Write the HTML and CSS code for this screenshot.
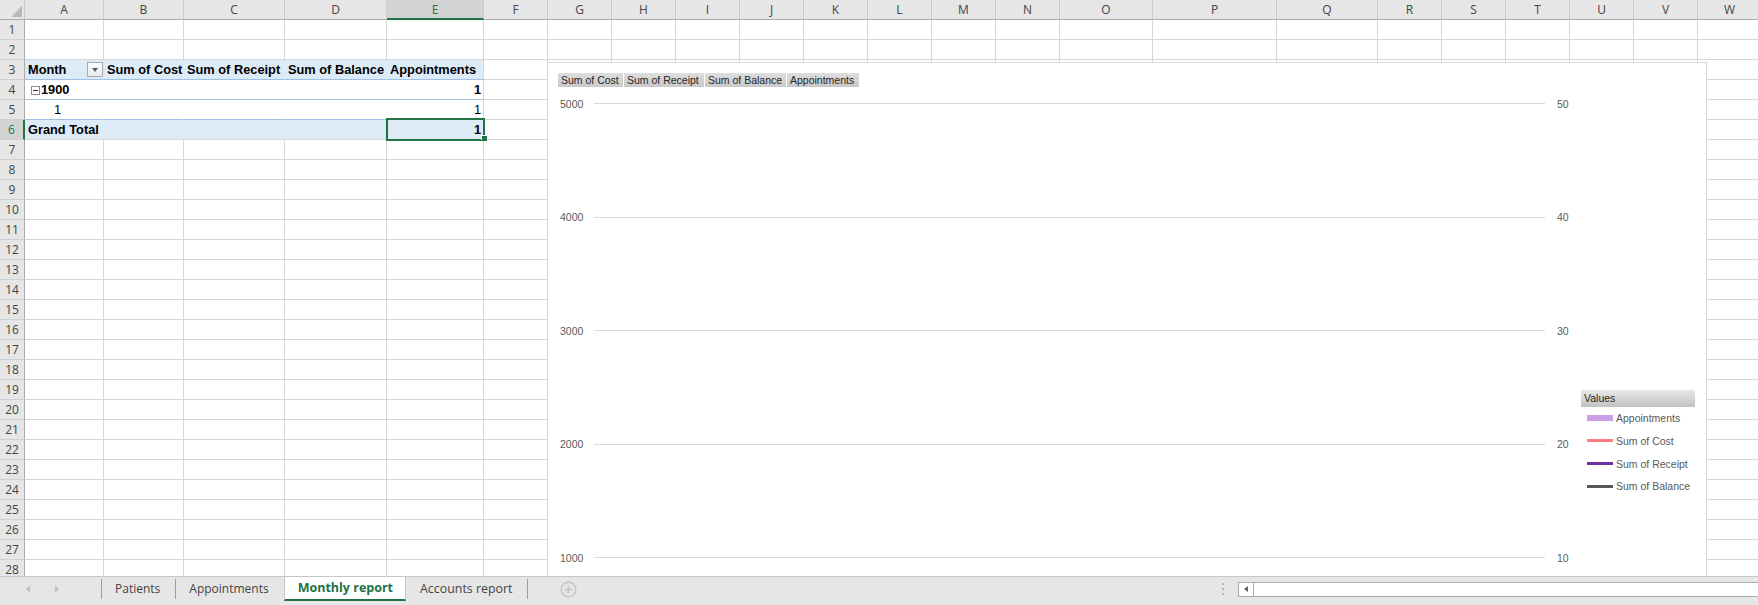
FILE: index.html
```html
<!DOCTYPE html>
<html lang="en">
<head>
<meta charset="utf-8">
<title>Monthly report</title>
<link rel="stylesheet" href="styles.css">
</head>
<body>
<div class="app">
  <div class="sheet">
    <div class="grid">
      <div class="corner"></div>
      <div class="ch">A</div><div class="ch">B</div><div class="ch">C</div><div class="ch">D</div><div class="ch csel">E</div><div class="ch">F</div><div class="ch">G</div><div class="ch">H</div><div class="ch">I</div><div class="ch">J</div><div class="ch">K</div><div class="ch">L</div><div class="ch">M</div><div class="ch">N</div><div class="ch">O</div><div class="ch">P</div><div class="ch">Q</div><div class="ch">R</div><div class="ch">S</div><div class="ch">T</div><div class="ch">U</div><div class="ch">V</div><div class="ch">W</div>

      <div class="rh">1</div><div></div><div></div><div></div><div></div><div></div><div></div><div></div><div></div><div></div><div></div><div></div><div></div><div></div><div></div><div></div><div></div><div></div><div></div><div></div><div></div><div></div><div></div><div></div>
      <div class="rh">2</div><div></div><div></div><div></div><div></div><div></div><div></div><div></div><div></div><div></div><div></div><div></div><div></div><div></div><div></div><div></div><div></div><div></div><div></div><div></div><div></div><div></div><div></div><div></div>

      <div class="rh">3</div><div class="pv ph b month"><span>Month</span><span class="dd"></span></div><div class="pv ph b">Sum of Cost</div><div class="pv ph b">Sum of Receipt</div><div class="pv ph b">Sum of Balance</div><div class="pv ph pe b">Appointments</div><div></div><div></div><div></div><div></div><div></div><div></div><div></div><div></div><div></div><div></div><div></div><div></div><div></div><div></div><div></div><div></div><div></div><div></div>

      <div class="rh">4</div><div class="pv pr b year"><span class="tog"></span>1900</div><div class="pv pr"></div><div class="pv pr"></div><div class="pv pr"></div><div class="pv pr pe num b">1</div><div></div><div></div><div></div><div></div><div></div><div></div><div></div><div></div><div></div><div></div><div></div><div></div><div></div><div></div><div></div><div></div><div></div><div></div>

      <div class="rh">5</div><div class="pv pr ind">1</div><div class="pv pr"></div><div class="pv pr"></div><div class="pv pr"></div><div class="pv pr pe num">1</div><div></div><div></div><div></div><div></div><div></div><div></div><div></div><div></div><div></div><div></div><div></div><div></div><div></div><div></div><div></div><div></div><div></div><div></div>

      <div class="rh rsel">6</div><div class="pv pg b">Grand Total</div><div class="pv pg"></div><div class="pv pg"></div><div class="pv pg"></div><div class="pv pg pe num b sel">1<span class="handle"></span></div><div></div><div></div><div></div><div></div><div></div><div></div><div></div><div></div><div></div><div></div><div></div><div></div><div></div><div></div><div></div><div></div><div></div><div></div>

      <div class="rh">7</div><div></div><div></div><div></div><div></div><div></div><div></div><div></div><div></div><div></div><div></div><div></div><div></div><div></div><div></div><div></div><div></div><div></div><div></div><div></div><div></div><div></div><div></div><div></div>
      <div class="rh">8</div><div></div><div></div><div></div><div></div><div></div><div></div><div></div><div></div><div></div><div></div><div></div><div></div><div></div><div></div><div></div><div></div><div></div><div></div><div></div><div></div><div></div><div></div><div></div>
      <div class="rh">9</div><div></div><div></div><div></div><div></div><div></div><div></div><div></div><div></div><div></div><div></div><div></div><div></div><div></div><div></div><div></div><div></div><div></div><div></div><div></div><div></div><div></div><div></div><div></div>
      <div class="rh">10</div><div></div><div></div><div></div><div></div><div></div><div></div><div></div><div></div><div></div><div></div><div></div><div></div><div></div><div></div><div></div><div></div><div></div><div></div><div></div><div></div><div></div><div></div><div></div>
      <div class="rh">11</div><div></div><div></div><div></div><div></div><div></div><div></div><div></div><div></div><div></div><div></div><div></div><div></div><div></div><div></div><div></div><div></div><div></div><div></div><div></div><div></div><div></div><div></div><div></div>
      <div class="rh">12</div><div></div><div></div><div></div><div></div><div></div><div></div><div></div><div></div><div></div><div></div><div></div><div></div><div></div><div></div><div></div><div></div><div></div><div></div><div></div><div></div><div></div><div></div><div></div>
      <div class="rh">13</div><div></div><div></div><div></div><div></div><div></div><div></div><div></div><div></div><div></div><div></div><div></div><div></div><div></div><div></div><div></div><div></div><div></div><div></div><div></div><div></div><div></div><div></div><div></div>
      <div class="rh">14</div><div></div><div></div><div></div><div></div><div></div><div></div><div></div><div></div><div></div><div></div><div></div><div></div><div></div><div></div><div></div><div></div><div></div><div></div><div></div><div></div><div></div><div></div><div></div>
      <div class="rh">15</div><div></div><div></div><div></div><div></div><div></div><div></div><div></div><div></div><div></div><div></div><div></div><div></div><div></div><div></div><div></div><div></div><div></div><div></div><div></div><div></div><div></div><div></div><div></div>
      <div class="rh">16</div><div></div><div></div><div></div><div></div><div></div><div></div><div></div><div></div><div></div><div></div><div></div><div></div><div></div><div></div><div></div><div></div><div></div><div></div><div></div><div></div><div></div><div></div><div></div>
      <div class="rh">17</div><div></div><div></div><div></div><div></div><div></div><div></div><div></div><div></div><div></div><div></div><div></div><div></div><div></div><div></div><div></div><div></div><div></div><div></div><div></div><div></div><div></div><div></div><div></div>
      <div class="rh">18</div><div></div><div></div><div></div><div></div><div></div><div></div><div></div><div></div><div></div><div></div><div></div><div></div><div></div><div></div><div></div><div></div><div></div><div></div><div></div><div></div><div></div><div></div><div></div>
      <div class="rh">19</div><div></div><div></div><div></div><div></div><div></div><div></div><div></div><div></div><div></div><div></div><div></div><div></div><div></div><div></div><div></div><div></div><div></div><div></div><div></div><div></div><div></div><div></div><div></div>
      <div class="rh">20</div><div></div><div></div><div></div><div></div><div></div><div></div><div></div><div></div><div></div><div></div><div></div><div></div><div></div><div></div><div></div><div></div><div></div><div></div><div></div><div></div><div></div><div></div><div></div>
      <div class="rh">21</div><div></div><div></div><div></div><div></div><div></div><div></div><div></div><div></div><div></div><div></div><div></div><div></div><div></div><div></div><div></div><div></div><div></div><div></div><div></div><div></div><div></div><div></div><div></div>
      <div class="rh">22</div><div></div><div></div><div></div><div></div><div></div><div></div><div></div><div></div><div></div><div></div><div></div><div></div><div></div><div></div><div></div><div></div><div></div><div></div><div></div><div></div><div></div><div></div><div></div>
      <div class="rh">23</div><div></div><div></div><div></div><div></div><div></div><div></div><div></div><div></div><div></div><div></div><div></div><div></div><div></div><div></div><div></div><div></div><div></div><div></div><div></div><div></div><div></div><div></div><div></div>
      <div class="rh">24</div><div></div><div></div><div></div><div></div><div></div><div></div><div></div><div></div><div></div><div></div><div></div><div></div><div></div><div></div><div></div><div></div><div></div><div></div><div></div><div></div><div></div><div></div><div></div>
      <div class="rh">25</div><div></div><div></div><div></div><div></div><div></div><div></div><div></div><div></div><div></div><div></div><div></div><div></div><div></div><div></div><div></div><div></div><div></div><div></div><div></div><div></div><div></div><div></div><div></div>
      <div class="rh">26</div><div></div><div></div><div></div><div></div><div></div><div></div><div></div><div></div><div></div><div></div><div></div><div></div><div></div><div></div><div></div><div></div><div></div><div></div><div></div><div></div><div></div><div></div><div></div>
      <div class="rh">27</div><div></div><div></div><div></div><div></div><div></div><div></div><div></div><div></div><div></div><div></div><div></div><div></div><div></div><div></div><div></div><div></div><div></div><div></div><div></div><div></div><div></div><div></div><div></div>
      <div class="rh">28</div><div></div><div></div><div></div><div></div><div></div><div></div><div></div><div></div><div></div><div></div><div></div><div></div><div></div><div></div><div></div><div></div><div></div><div></div><div></div><div></div><div></div><div></div><div></div>
    </div>

    <div class="chart">
      <div class="plot">
        <div class="fields">
          <div class="fbtn f-cost">Sum of Cost</div>
          <div class="fbtn f-receipt">Sum of Receipt</div>
          <div class="fbtn f-balance">Sum of Balance</div>
          <div class="fbtn f-appt">Appointments</div>
        </div>
        <div class="axis">
          <div class="tick"><span class="tl">5000</span><span class="tline"></span><span class="tr">50</span></div>
          <div class="tick"><span class="tl">4000</span><span class="tline"></span><span class="tr">40</span></div>
          <div class="tick"><span class="tl">3000</span><span class="tline"></span><span class="tr">30</span></div>
          <div class="tick"><span class="tl">2000</span><span class="tline"></span><span class="tr">20</span></div>
          <div class="tick"><span class="tl">1000</span><span class="tline"></span><span class="tr">10</span></div>
        </div>
      </div>
      <div class="legend">
        <div class="lhead">Values</div>
        <div class="litem"><span class="sw sw-appt"></span>Appointments</div>
        <div class="litem"><span class="sw sw-cost"></span>Sum of Cost</div>
        <div class="litem"><span class="sw sw-receipt"></span>Sum of Receipt</div>
        <div class="litem"><span class="sw sw-balance"></span>Sum of Balance</div>
      </div>
    </div>
  </div>

  <div class="tabbar">
    <div class="nav"><span class="arr arr-l"></span><span class="arr arr-r"></span></div>
    <span class="sep"></span>
    <div class="tab">Patients</div>
    <span class="sep"></span>
    <div class="tab">Appointments</div>
    <div class="tab active">Monthly report</div>
    <div class="tab tab-last">Accounts report</div>
    <span class="sep"></span>
    <div class="add">
      <svg width="17" height="17" viewBox="0 0 17 17"><circle cx="8.5" cy="8.5" r="7.3" fill="none" stroke="#c4c4c4" stroke-width="1.4"/><path d="M8.5 4.8v7.4M4.8 8.5h7.4" stroke="#c4c4c4" stroke-width="1.6"/></svg>
    </div>
    <div class="dots"><span></span><span></span><span></span></div>
    <div class="hscroll"><span class="sb-left"><span class="sb-tri"></span></span></div>
  </div>
</div>
</body>
</html>
```
FILE: styles.css
```css
html, body {
  margin: 0;
  padding: 0;
}
body {
  width: 1758px;
  height: 605px;
  overflow: hidden;
  background: #fff;
  font-family: "Liberation Sans", Arial, sans-serif;
  color: #000;
}
.app {
  display: flex;
  flex-direction: column;
  height: 605px;
}
.sheet {
  position: relative;
  flex: none;
  height: 576px;
  overflow: hidden;
}
.grid {
  display: grid;
  grid-template-columns: 25px 79px 80px 101px 102px 97px repeat(9, 64px) 93px 124px 101px repeat(6, 64px);
  grid-auto-rows: 20px;
  width: max-content;
}
.grid > * {
  position: relative;
  box-sizing: border-box;
  border-right: 1px solid #d6d6d6;
  border-bottom: 1px solid #d6d6d6;
  padding: 0 3px;
  font-size: 12.8px;
  line-height: 20px;
  white-space: nowrap;
}
.corner {
  background: #e6e6e6;
  border-right-color: #c8c8c8;
  border-bottom-color: #ababab;
}
.corner::after {
  content: "";
  position: absolute;
  right: 2px;
  bottom: 2px;
  width: 0;
  height: 0;
  border-style: solid;
  border-width: 0 0 11px 11px;
  border-color: transparent transparent #b9b9b9 transparent;
}
.ch {
  background: #e6e6e6;
  border-right-color: #cbcbcb;
  border-bottom-color: #ababab;
  text-align: center;
  font-family: "Open Sans", sans-serif;
  font-size: 12px;
  line-height: 19px;
  color: #444;
}
.csel {
  background: #d3d3d3;
  color: #217346;
  border-bottom: 2px solid #217346;
}
.rh {
  background: #e6e6e6;
  border-right-color: #ababab;
  border-bottom-color: #d0d0d0;
  padding: 0;
  text-align: center;
  font-family: "Open Sans", sans-serif;
  font-size: 12px;
  line-height: 20px;
  color: #444;
}
.rsel {
  background: #d3d3d3;
  color: #217346;
  border-right: 2px solid #217346;
}

/* pivot table */
.pv {
  border-right-color: transparent;
}
.pe {
  border-right-color: #d6d6d6;
}
.ph {
  background: #ddebf7;
  border-bottom-color: #9bc2e6;
}
.pr {
  background: #fff;
  border-bottom-color: #9bc2e6;
}
.pg {
  background: #ddebf7;
}
.b {
  font-weight: bold;
}
.num {
  text-align: right;
  padding-right: 2px;
}
.month {
  display: flex;
  align-items: center;
  justify-content: space-between;
  padding-right: 0;
}
.dd {
  position: relative;
  width: 16px;
  height: 15px;
  box-sizing: border-box;
  border: 1px solid #a9a9a9;
  background: linear-gradient(#fbfbfb, #ececec);
}
.dd::after {
  content: "";
  position: absolute;
  left: 4px;
  top: 5px;
  border-style: solid;
  border-width: 4px 3.5px 0 3.5px;
  border-color: #5a5a5a transparent transparent transparent;
}
.year {
  padding-left: 6px;
  display: flex;
  align-items: center;
}
.tog {
  position: relative;
  width: 9px;
  height: 9px;
  box-sizing: border-box;
  border: 1px solid #8c8c8c;
  background: #fff;
  margin-right: 1px;
  margin-top: 1px;
}
.tog::after {
  content: "";
  position: absolute;
  left: 1px;
  top: 3px;
  width: 5px;
  height: 1px;
  background: #333;
}
.ind {
  padding-left: 29px;
}
.sel {
  z-index: 2;
}
.sel::before {
  content: "";
  position: absolute;
  left: -1px;
  top: -2px;
  width: 99px;
  height: 23px;
  box-sizing: border-box;
  border: 2px solid #217346;
}
.handle {
  position: absolute;
  left: 95px;
  top: 16px;
  width: 5px;
  height: 5px;
  background: #217346;
  box-shadow: -1px -1px 0 0 #fff;
}

/* chart overlay */
.chart {
  position: absolute;
  left: 547px;
  top: 62px;
  width: 1160px;
  height: 600px;
  box-sizing: border-box;
  border: 1px solid #d9d9d9;
  background: #fff;
  z-index: 3;
  display: flex;
  align-items: flex-start;
  padding: 10px 0 0 10px;
  font-family: "Liberation Sans", Arial, sans-serif;
  font-size: 10.5px;
  color: #595959;
}
.plot {
  display: flex;
  flex-direction: column;
  width: 1019px;
  flex: none;
}
.fields {
  display: flex;
  gap: 1px;
  height: 14px;
}
.fbtn {
  box-sizing: border-box;
  height: 14px;
  padding-left: 3px;
  line-height: 14px;
  white-space: nowrap;
  overflow: hidden;
  color: #262626;
  background: linear-gradient(#dedede, #c9c9c9);
}
.f-cost { width: 65px; }
.f-receipt { width: 80px; }
.f-balance { width: 81px; }
.f-appt { width: 72px; }
.axis {
  display: flex;
  flex-direction: column;
  gap: 98.5px;
  margin-top: 9px;
}
.tick {
  display: flex;
  align-items: center;
  height: 15px;
}
.tl {
  width: 36px;
  box-sizing: border-box;
  padding-left: 2px;
}
.tline {
  width: 951px;
  height: 1px;
  background: #d9d9d9;
}
.tr {
  margin-left: 12px;
}
.legend {
  flex: none;
  width: 114px;
  margin-left: 4px;
  margin-top: 317px;
}
.lhead {
  height: 17px;
  line-height: 17px;
  padding-left: 3px;
  color: #262626;
  background: linear-gradient(#e9e9e9, #c2c2c2);
}
.litem {
  display: flex;
  align-items: center;
  height: 22.67px;
  white-space: nowrap;
}
.sw {
  flex: none;
  width: 26px;
  height: 3px;
  margin: 0 3px 0 6px;
}
.sw-appt { height: 6px; background: #c9a0e6; }
.sw-cost { background: #ff7c80; }
.sw-receipt { background: #7030a0; }
.sw-balance { background: #595959; }

/* sheet tabs */
.tabbar {
  flex: none;
  height: 29px;
  box-sizing: border-box;
  border-top: 1px solid #c6c6c6;
  padding-bottom: 4px;
  background: #e6e6e6;
  display: flex;
  align-items: center;
  overflow: hidden;
  font-family: "Open Sans", sans-serif;
  font-size: 12px;
  color: #444;
}
.nav {
  flex: none;
  width: 101px;
  display: flex;
  align-items: center;
}
.arr {
  width: 0;
  height: 0;
  border-style: solid;
}
.arr-l {
  margin-left: 26px;
  border-width: 4px 4px 4px 0;
  border-color: transparent #c2c2c2 transparent transparent;
}
.arr-r {
  margin-left: 25px;
  border-width: 4px 0 4px 4px;
  border-color: transparent transparent transparent #c2c2c2;
}
.sep {
  flex: none;
  width: 1px;
  height: 20px;
  background: #9e9e9e;
}
.tab {
  flex: none;
  padding: 0 15px 0 13px;
  line-height: 24px;
  white-space: nowrap;
}
.tab.active {
  align-self: stretch;
  box-sizing: border-box;
  padding: 0 12px 0 13px;
  background: #fff;
  color: #217346;
  font-weight: bold;
  font-size: 12.5px;
  border-left: 1px solid #c6c6c6;
  border-right: 1px solid #c6c6c6;
  border-bottom: 2px solid #217346;
  line-height: 22px;
}
.tab-last {
  padding-left: 14px;
  font-size: 12.4px;
}
.add {
  flex: none;
  margin-left: 32px;
  display: flex;
}
.dots {
  margin-left: auto;
  margin-right: 14px;
  display: flex;
  flex-direction: column;
  gap: 3px;
}
.dots span {
  width: 2px;
  height: 2px;
  background: #b4b4b4;
}
.hscroll {
  flex: none;
  width: 520px;
  height: 15px;
  box-sizing: border-box;
  border: 1px solid #ababab;
  border-right: none;
  background: #fff;
  display: flex;
}
.sb-left {
  width: 15px;
  box-sizing: border-box;
  border-right: 1px solid #ababab;
  display: flex;
  align-items: center;
  justify-content: center;
}
.sb-tri {
  width: 0;
  height: 0;
  border-style: solid;
  border-width: 3.5px 4px 3.5px 0;
  border-color: transparent #606060 transparent transparent;
}
```
